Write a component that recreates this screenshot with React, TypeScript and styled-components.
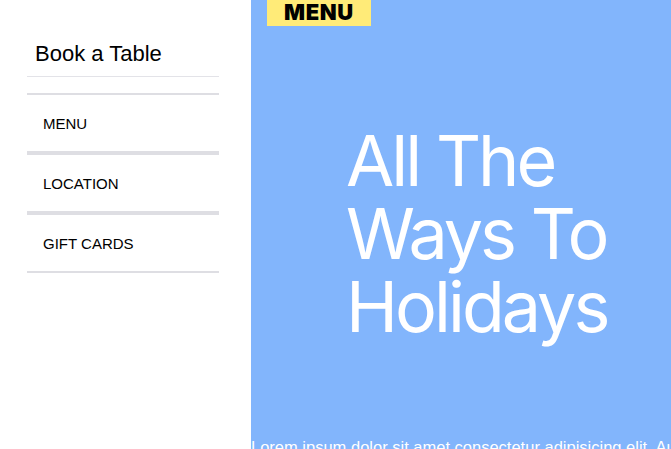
import React from "react";
import styled, { createGlobalStyle } from "styled-components";

const Global = createGlobalStyle`
  html, body { margin: 0; padding: 0; }
  body { overflow: hidden; background: #ffffff; }
  * { box-sizing: border-box; }
`;

const Layout = styled.div`
  display: flex;
  width: 100%;
  min-height: 100vh;
`;

const Sidebar = styled.aside`
  flex: 0 0 251px;
  width: 251px;
  padding: 41px 32px 0 27px;
  background: #ffffff;
  font-family: "Liberation Sans", Arial, sans-serif;
  color: #000000;
`;

const Brand = styled.div`
  padding: 0 8px 10px 8px;
  font-size: 22px;
  line-height: 25px;
  border-bottom: 1px solid #e3e3e8;
`;

const NavList = styled.ul`
  list-style: none;
  margin: 16px 0 0 0;
  padding: 0;
`;

const NavItem = styled.li`
  height: 60px;
  display: flex;
  align-items: center;
  padding: 2px 16px 0;
  border-top: 2px solid #dedee3;
  border-bottom: 2px solid #dedee3;
  font-size: 15px;
  line-height: 18px;
`;

const Main = styled.main`
  flex: 1;
  min-width: 0;
  background: #82b5fc;
  overflow: hidden;
  color: #ffffff;
`;

const Tag = styled.div`
  display: inline-block;
  margin-left: 16px;
  height: 26px;
  padding: 0 17px;
  background: #ffeb78;
  color: #000000;
  font-family: Inter, "Liberation Sans", sans-serif;
  font-weight: 900;
  font-size: 22px;
  line-height: 25px;
  letter-spacing: 0.6px;
  vertical-align: top;
`;

const Headline = styled.h1`
  margin: 98px 0 0 95px;
  font-family: Inter, "Liberation Sans", sans-serif;
  font-weight: 400;
  font-size: 70px;
  line-height: 73px;
  letter-spacing: -3px;
  max-width: 290px;
`;

const Lead = styled.p`
  margin: 95px 0 0 0;
  font-family: "Liberation Sans", Arial, sans-serif;
  font-size: 16.5px;
  line-height: 19px;
  white-space: nowrap;
`;

const items = ["MENU", "LOCATION", "GIFT CARDS"];

export default function App() {
  return (
    <>
      <Global />
      <Layout>
        <Sidebar>
          <Brand>Book a Table</Brand>
          <NavList>
            {items.map((t) => (
              <NavItem key={t}>{t}</NavItem>
            ))}
          </NavList>
        </Sidebar>
        <Main>
          <Tag>MENU</Tag>
          <Headline>All The Ways To Holidays</Headline>
          <Lead>
            Lorem ipsum dolor sit amet consectetur adipisicing elit. Autem
            voluptates quas, ad nobis ipsum tempora.
          </Lead>
        </Main>
      </Layout>
    </>
  );
}
